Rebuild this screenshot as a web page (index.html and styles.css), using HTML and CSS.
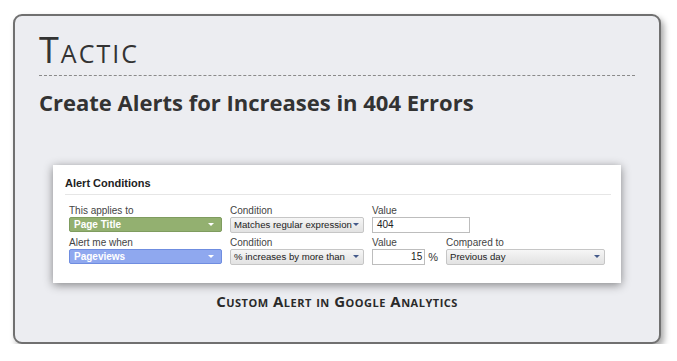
FILE: index.html
```html
<!DOCTYPE html>
<html lang="en">
<head>
  <meta charset="UTF-8" />
  <title>Tactic</title>
  <link rel="stylesheet" href="styles.css">
</head>
<body>
  <div class="card">
    <h1 class="kicker">Tactic</h1>
    <h2 class="title">Create Alerts for Increases in 404 Errors</h2>

    <div class="shot">
      <div class="shot-head">Alert Conditions</div>

      <div class="row">
        <div class="field f1">
          <label>This applies to</label>
          <div class="select green">Page Title<span class="arrow white"></span></div>
        </div>
        <div class="field f2">
          <label>Condition</label>
          <div class="select gray">Matches regular expression<span class="arrow"></span></div>
        </div>
        <div class="field f3">
          <label>Value</label>
          <div class="input">404</div>
        </div>
      </div>

      <div class="row">
        <div class="field f1">
          <label>Alert me when</label>
          <div class="select blue">Pageviews<span class="arrow white"></span></div>
        </div>
        <div class="field f2">
          <label>Condition</label>
          <div class="select gray">% increases by more than<span class="arrow"></span></div>
        </div>
        <div class="field f4">
          <label>Value</label>
          <div class="pct"><div class="input num">15</div><span>%</span></div>
        </div>
        <div class="field f5">
          <label>Compared to</label>
          <div class="select gray">Previous day<span class="arrow"></span></div>
        </div>
      </div>
    </div>

    <p class="caption">Custom Alert in Google Analytics</p>
  </div>
</body>
</html>
```

FILE: styles.css
```css
body {
  margin: 0;
  padding: 14px 0 0 13px;
  background: #fff;
  font-family: "Open Sans", sans-serif;
}

.card {
  width: 620px;
  height: 326px;
  border: 2px solid #707070;
  border-radius: 9px;
  background: #ecedf1;
  box-shadow: 3px 4px 6px rgba(0, 0, 0, 0.35);
  padding: 0 0 0 24px;
}

.kicker {
  margin: 12px 0 0 0;
  font-size: 36px;
  font-weight: 400;
  font-variant: small-caps;
  letter-spacing: 2px;
  color: #333;
  line-height: 44px;
  width: 596px;
  border-bottom: 1px dashed #8a8a8a;
  padding-bottom: 3px;
}

.title {
  margin: 13px 0 0 0;
  font-size: 22px;
  font-weight: 700;
  color: #333;
  line-height: 26px;
}

.shot {
  margin: 50px 0 0 14px;
  width: 568px;
  height: 118px;
  background: #fff;
  box-shadow: 0 2px 9px rgba(0, 0, 0, 0.45);
  box-sizing: border-box;
  padding: 12px 10px 0 12px;
  font-family: "Liberation Sans", Arial, sans-serif;
  color: #333;
}

.shot-head {
  font-size: 11px;
  font-weight: 700;
  color: #222;
  padding-bottom: 5px;
  border-bottom: 1px solid #e6e6e6;
  margin-bottom: 9px;
}

.row {
  display: flex;
  gap: 8px;
  padding-left: 4px;
  margin-bottom: 3px;
}

.field label {
  display: block;
  font-size: 10px;
  color: #444;
  line-height: 13px;
  height: 13px;
}

.f1 { width: 153px; }
.f2 { width: 134px; }
.f3 { width: 98px; }
.f4 { width: 66px; }
.f5 { width: 159px; }

.select {
  position: relative;
  height: 15px;
  line-height: 15px;
  font-size: 10px;
  padding: 0 0 0 4px;
  border-radius: 2px;
  box-sizing: border-box;
  white-space: nowrap;
  overflow: hidden;
}

.select.green {
  background: #93b070;
  border: 1px solid #7f9c5f;
  color: #fff;
  font-weight: 700;
  line-height: 13px;
}

.select.blue {
  background: #8fa8ef;
  border: 1px solid #6f8de0;
  color: #fff;
  font-weight: 700;
  line-height: 13px;
}

.select.gray {
  height: 16px;
  background: linear-gradient(#f6f6f6, #e2e2e2);
  border: 1px solid #c6c6c6;
  color: #222;
  line-height: 14px;
  padding-left: 3px;
  font-size: 9.6px;
}

.arrow {
  position: absolute;
  right: 4px;
  top: 5px;
  width: 0;
  height: 0;
  border-left: 3px solid transparent;
  border-right: 3px solid transparent;
  border-top: 3px solid #445a8a;
}

.arrow.white {
  border-top-color: #fff;
  right: 7px;
}

.input {
  height: 16px;
  line-height: 14px;
  border: 1px solid #bdbdbd;
  box-sizing: border-box;
  font-size: 10px;
  padding: 0 4px;
  color: #222;
  background: #fff;
}

.pct {
  display: flex;
  align-items: center;
  gap: 3px;
  font-size: 11px;
}

.input.num {
  width: 55px;
  text-align: right;
  padding-right: 2px;
}

.caption {
  margin: 8px 0 0 0;
  width: 596px;
  text-align: center;
  font-size: 15px;
  font-weight: 700;
  font-variant: small-caps;
  color: #2a2a2a;
  letter-spacing: 0.5px;
}
```
